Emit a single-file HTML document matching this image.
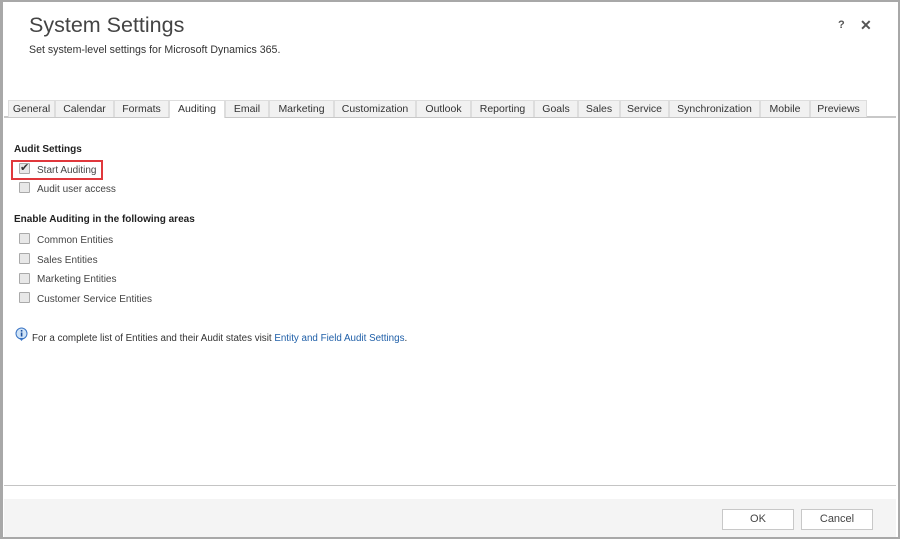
<!DOCTYPE html>
<html><head><meta charset="utf-8"><style>
*{margin:0;padding:0;box-sizing:border-box}
body{width:900px;height:539px;background:#fff;font-family:"Liberation Sans",sans-serif;color:#444;position:relative;overflow:hidden}
.frame{position:absolute;left:0;top:0;width:900px;height:539px;border:2px solid #a8a8a8;border-left-width:3px}
.abs{position:absolute;white-space:nowrap}
.tab{position:absolute;top:100px;height:17px;background:#f1f1f1;border:1px solid #ddd;border-bottom:none;font-size:10.5px;line-height:16px;text-align:center;color:#333}
.tab.on{background:#fff}
.cb{position:absolute;left:19px;width:11px;height:11px;border:1px solid #aaa;background:#e8e8e8;border-radius:1px}
.lbl{position:absolute;left:37px;font-size:10px;color:#444;white-space:nowrap}
.btn{position:absolute;top:509px;height:21px;border:1px solid #c8c8c8;background:#fff;font-size:11px;line-height:19px;text-align:center;color:#444}
</style></head><body>
<div class="frame"></div>
<div class="abs" style="left:29px;top:13px;font-size:21.5px;color:#444">System Settings</div>
<div class="abs" style="left:29px;top:44px;font-size:10.6px;color:#333">Set system-level settings for Microsoft Dynamics 365.</div>
<div class="abs" style="left:838px;top:19px;font-size:11px;font-weight:bold;color:#555">?</div>
<div class="abs" style="left:860px;top:17px;font-size:14px;font-weight:bold;color:#555">✕</div>
<div class="abs" style="left:4px;top:116px;width:892px;height:2px;background:#c8c8c8"></div>
<div class="tab" style="left:8px;width:47px">General</div>
<div class="tab" style="left:55px;width:59px">Calendar</div>
<div class="tab" style="left:114px;width:55px">Formats</div>
<div class="tab on" style="left:169px;width:56px;height:18px">Auditing</div>
<div class="tab" style="left:225px;width:44px">Email</div>
<div class="tab" style="left:269px;width:65px">Marketing</div>
<div class="tab" style="left:334px;width:82px">Customization</div>
<div class="tab" style="left:416px;width:55px">Outlook</div>
<div class="tab" style="left:471px;width:63px">Reporting</div>
<div class="tab" style="left:534px;width:44px">Goals</div>
<div class="tab" style="left:578px;width:42px">Sales</div>
<div class="tab" style="left:620px;width:49px">Service</div>
<div class="tab" style="left:669px;width:91px">Synchronization</div>
<div class="tab" style="left:760px;width:50px">Mobile</div>
<div class="tab" style="left:810px;width:57px">Previews</div>
<div class="abs" style="left:14px;top:144px;font-size:10px;font-weight:bold;color:#222">Audit Settings</div>
<div class="abs" style="left:11px;top:160px;width:92px;height:20px;border:2px solid #e0383c"></div>
<div class="cb" style="top:163px"></div><div class="abs" style="left:20px;top:161px;font-size:11px;color:#333">✔</div>
<div class="lbl" style="top:165px">Start Auditing</div>
<div class="cb" style="top:182px"></div><div class="lbl" style="top:184px">Audit user access</div>
<div class="abs" style="left:14px;top:214px;font-size:10px;font-weight:bold;color:#222">Enable Auditing in the following areas</div>
<div class="cb" style="top:233px"></div><div class="lbl" style="top:235px">Common Entities</div>
<div class="cb" style="top:253px"></div><div class="lbl" style="top:255px">Sales Entities</div>
<div class="cb" style="top:273px"></div><div class="lbl" style="top:274px">Marketing Entities</div>
<div class="cb" style="top:292px"></div><div class="lbl" style="top:294px">Customer Service Entities</div>
<svg class="abs" style="left:14px;top:327px" width="15" height="15" viewBox="0 0 15 15"><circle cx="7.5" cy="6.5" r="5.5" fill="#cfe3f7" stroke="#3a74c4"/><path d="M5 11 L7.5 14 L10 11Z" fill="#3a74c4"/><rect x="6.8" y="5.5" width="1.6" height="4" fill="#1d4f9c"/><rect x="6.8" y="3" width="1.6" height="1.6" fill="#1d4f9c"/></svg>
<div class="abs" style="left:32px;top:333px;font-size:9.8px;color:#333">For a complete list of Entities and their Audit states visit <span style="color:#1f5fa8">Entity and Field Audit Settings</span>.</div>
<div class="abs" style="left:4px;top:485px;width:892px;height:1px;background:#c4c4c4"></div>
<div class="abs" style="left:4px;top:499px;width:892px;height:38px;background:#f4f4f4"></div>
<div class="btn" style="left:722px;width:72px">OK</div>
<div class="btn" style="left:801px;width:72px">Cancel</div>
</body></html>
